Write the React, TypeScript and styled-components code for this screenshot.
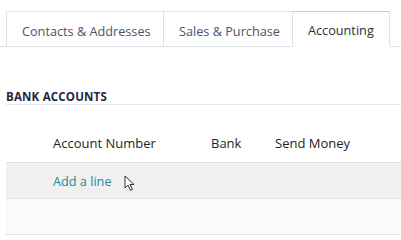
import React from "react";
import styled, { createGlobalStyle } from "styled-components";

const Global = createGlobalStyle`
  html, body { margin: 0; padding: 0; background: #ffffff; }
  body { font-family: "Open Sans", "Noto Sans", sans-serif; width: 401px; height: 240px; overflow: hidden; }
`;

const Page = styled.div`
  position: relative;
  width: 401px;
  height: 240px;
  padding-top: 12px;
  box-sizing: border-box;
`;

const TabBar = styled.div`
  display: flex;
  align-items: flex-end;
  padding-left: 6px;
  border-bottom: 1px solid #dee2e6;
  height: 35px;
  box-sizing: border-box;
`;

const Tab = styled.div<{ $active?: boolean; $w: number }>`
  box-sizing: border-box;
  width: ${(p) => p.$w}px;
  height: ${(p) => (p.$active ? 36 : 35)}px;
  margin-left: -1px;
  margin-bottom: ${(p) => (p.$active ? -1 : 0)}px;
  border: 1px solid #dee2e6;
  border-top-color: ${(p) => (p.$active ? "#c9ced3" : "#e6e9ec")};
  border-bottom: ${(p) => (p.$active ? "1px solid #ffffff" : "none")};
  background: #ffffff;
  display: flex;
  align-items: center;
  padding: ${(p) => (p.$active ? 2 : 3)}px 0 0 15px;
  font-size: 12.7px;
  color: ${(p) => (p.$active ? "#2b2f36" : "#4a5466")};
  white-space: nowrap;
  &:first-child { margin-left: 0; }
`;

const Section = styled.div`
  padding: 0 0 0 6px;
  margin-top: 43px;
`;

const Heading = styled.div`
  font-weight: 700;
  font-size: 11.5px;
  color: #1d2840;
  letter-spacing: 0.2px;
  height: 14px;
  line-height: 14px;
  border-bottom: 1px solid #e6e9ec;
`;

const HeaderRow = styled.div`
  display: grid;
  grid-template-columns: 47px 158px 64px 1fr;
  height: 57px;
  align-items: end;
  padding-bottom: 10px;
  box-sizing: border-box;
  font-size: 13px;
  color: #1b1f25;
`;

const Row = styled.div<{ $bg: string }>`
  display: grid;
  grid-template-columns: 47px 1fr;
  align-items: center;
  height: 35px;
  background: ${(p) => p.$bg};
  border-top: 1px solid #dee2e6;
  font-size: 13px;
  &:last-child { border-bottom: 1px solid #dee2e6; }
`;

const Link = styled.span`
  color: #1f8891;
  font-size: 12.7px;
`;

const Cursor = styled.svg`
  position: absolute;
  left: 124px;
  top: 175px;
`;

export default function App() {
  return (
    <Page>
      <Global />
      <TabBar>
        <Tab $w={158}>Contacts &amp; Addresses</Tab>
        <Tab $w={130}>Sales &amp; Purchase</Tab>
        <Tab $w={98} $active>Accounting</Tab>
      </TabBar>
      <Section>
        <Heading>BANK ACCOUNTS</Heading>
        <HeaderRow>
          <span />
          <span>Account Number</span>
          <span>Bank</span>
          <span>Send Money</span>
        </HeaderRow>
        <div>
          <Row $bg="#f0f0f0">
            <span />
            <Link>Add a line</Link>
          </Row>
          <Row $bg="#fafafa" />
        </div>
      </Section>
      <Cursor width="12" height="17" viewBox="0 0 12 17">
        <path d="M1 1 L1 13 L4 10 L6.5 15.5 L8.5 14.5 L6 9.5 L10 9.5 Z" fill="#ffffff" stroke="#333" strokeWidth="1" strokeLinejoin="round" />
      </Cursor>
    </Page>
  );
}
